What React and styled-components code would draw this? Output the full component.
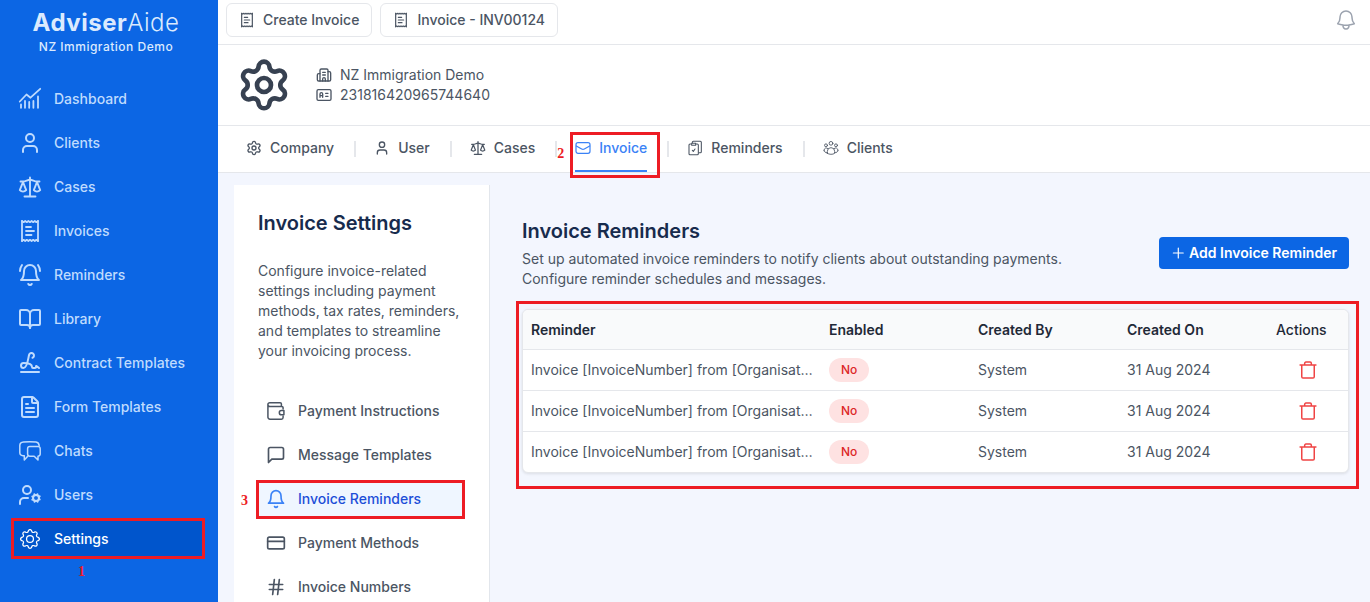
import React from 'react';
import styled, { createGlobalStyle, css } from 'styled-components';
import { BookOpen, Building2, CreditCard, FileText, Settings, Signature, User } from 'lucide-react';
import { FiBell, FiHash, FiMessageSquare } from 'react-icons/fi';
import { BsGear } from 'react-icons/bs';

const GlobalStyle = createGlobalStyle`
  * {
    box-sizing: border-box;
  }
  body {
    margin: 0;
    font-family: Inter, "Liberation Sans", sans-serif;
    font-size: 14px;
    line-height: 20px;
    color: #4b5563;
    background: #f3f6fe;
  }
  a {
    color: inherit;
    text-decoration: none;
  }
  button {
    font: inherit;
    cursor: pointer;
  }
  h1, h2, p, ul {
    margin: 0;
    padding: 0;
  }
  svg {
    flex-shrink: 0;
  }
`;

//icons
const Icon = ({ size = 24, width = 2, children }) => (
  <svg width={ size } height={ size } viewBox="0 0 24 24" fill="none" stroke="currentColor"
    strokeWidth={ width } strokeLinecap="round" strokeLinejoin="round" aria-hidden="true">
    { children }
  </svg>
);

const ChartIcon = () => (
  <Icon width={ 1.8 }>
    <path d="M1.8 14.5 8.5 7.5l4 3.2 9.7-8.9" />
    <path d="M3 17.5v3.3M7 14v6.8M11.2 15v5.8M15.4 14v6.8M20 9.5v11.3" />
  </Icon>
);

const ScaleIcon = ({ size }) => (
  <Icon size={ size } width={ 1.9 }>
    <path d="M12 2.5v19M6.5 21.5h11" />
    <path d="M2.5 6.5H5c2.6 0 4.6-1.8 7-1.8s4.4 1.8 7 1.8h2.5" />
    <path d="m5 7-3.2 8.2c1.8 1.9 4.6 1.9 6.4 0zM19 7l-3.2 8.2c1.8 1.9 4.6 1.9 6.4 0z" />
  </Icon>
);

const ReceiptIcon = ({ size }) => (
  <Icon size={ size } width={ 1.8 }>
    <path d="M4 2v20M20 2v20" />
    <path d="m4 2 1.6 1.2L7.2 2l1.6 1.2L10.4 2 12 3.2 13.6 2l1.6 1.2L16.8 2l1.6 1.2L20 2" />
    <path d="m4 22 1.6-1.2L7.2 22l1.6-1.2 1.6 1.2 1.6-1.2 1.6 1.2 1.6-1.2 1.6 1.2 1.6-1.2L20 22" />
    <path d="M8 8h5M8 12h8M8 16h5.5" />
  </Icon>
);

const BellRingIcon = () => (
  <Icon>
    <path d="M6 8a6 6 0 0 1 12 0c0 7 3 9 3 9H3s3-2 3-9" />
    <path d="M10.3 21a1.94 1.94 0 0 0 3.4 0" />
    <path d="M4 2C2.8 3.7 2 5.7 2 8M22 8c0-2.3-.8-4.3-2-6" />
  </Icon>
);

const ChatsIcon = () => (
  <Icon width={ 1.5 }>
    <path d="M9.5 17.5 6.3 21v-4.300H5C2.800 16.700 1.800 15.500 1.800 13.500V6.500C1.800 4.200 3 3.200 5.500 3c4-.4 8.500-.4 12.500 0 2 .2 3 1.300 3.200 3.800" />
    <path d="M11.800 7.500h8.200a2.200 2.200 0 0 1 2.200 2.200v5.300a2.200 2.200 0 0 1-2.200 2.200V21l-3.800-3.800h-4.400a2.200 2.200 0 0 1-2.200-2.200V9.700a2.200 2.200 0 0 1 2.200-2.200Z" />
  </Icon>
);

const UserCogIcon = () => (
  <Icon>
    <circle cx="9" cy="7" r="4" />
    <path d="M10 15H6a4 4 0 0 0-4 4v2" />
    <circle cx="18" cy="15" r="3" />
    <path d="m21.7 16.4-.9-.3M15.2 13.9l-.9-.3M16.6 18.7l.3-.9M19.1 12.2l.3-.9M19.6 18.7l-.4-1M16.8 12.3l-.4-1M14.3 16.6l1-.4M20.7 13.8l1-.4" />
  </Icon>
);

const CardIdIcon = () => (
  <Icon size={ 16 }>
    <rect x="1.5" y="4" width="21" height="16" rx="2" />
    <path d="M6 15.5v-5a1.5 1.5 0 0 1 4 0v5M6 13h4M14.5 9.5H18M14.5 14H18" />
  </Icon>
);

const MailIcon = () => (
  <Icon size={ 16 } width={ 1.8 }>
    <rect x="1.5" y="4" width="21" height="16" rx="3" />
    <path d="m2 9 8 4.5a4 4 0 0 0 4 0L22 9" />
  </Icon>
);

const ClipboardIcon = () => (
  <Icon size={ 16 } width={ 1.6 }>
    <path d="M8 4V3.500A1.500 1.500 0 0 1 9.500 2H20a1.500 1.500 0 0 1 1.500 1.500v14A1.500 1.500 0 0 1 20 19h-2" />
    <path d="M6 6H4.500A1.500 1.500 0 0 0 3 7.500v13A1.500 1.500 0 0 0 4.500 22h11a1.500 1.500 0 0 0 1.500-1.500v-13A1.500 1.500 0 0 0 15.500 6H14" />
    <path d="M7 5h6v3H7zM8 15.500l1.500 1.500 2.500-3.500" />
  </Icon>
);

const GroupIcon = () => (
  <Icon size={ 16 } width={ 1.3 }>
    <circle cx="12" cy="5" r="2.8" />
    <circle cx="4.5" cy="8" r="2.2" />
    <circle cx="19.5" cy="8" r="2.2" />
    <path d="M6.500 20v-3a5.500 5.500 0 0 1 11 0v3c-3 2-8 2-11 0zM1.500 15.500a3.500 3.500 0 0 1 6-2.500M22.500 15.500a3.500 3.500 0 0 0-6-2.500M1.500 15.500c0 2.500 2 3.500 5 3.500M22.500 15.500c0 2.500-2 3.500-5 3.500" />
  </Icon>
);

const WalletIcon = () => (
  <Icon size={ 20 } width={ 1.8 }>
    <path d="M20.5 9.5V8A1.5 1.5 0 0 0 19 6.500H4.500a2.200 2.200 0 0 1 0-4.500H17a1.500 1.500 0 0 1 1.500 1.500v3M2.300 4v15A2.500 2.500 0 0 0 5 21.800h13.500a2 2 0 0 0 2-2V18" />
    <path d="M21.5 11.5v5h-3a2.500 2.500 0 0 1 0-5z" />
  </Icon>
);

const TrashIcon = () => (
  <Icon size={ 20 } width={ 1.8 }>
    <path d="M2.5 6h19M4.5 6v14A1.5 1.5 0 0 0 6 21.500h12a1.500 1.500 0 0 0 1.500-1.500V6M8 6V4a1.500 1.500 0 0 1 1.500-1.500h5A1.500 1.500 0 0 1 16 4v2" />
  </Icon>
);

const AlertBellIcon = () => (
  <Icon size={ 24 } width={ 1.5 }>
    <path d="M14.857 17.082a23.848 23.848 0 0 0 5.454-1.31A8.967 8.967 0 0 1 18 9.75V9A6 6 0 0 0 6 9v.75a8.967 8.967 0 0 1-2.312 6.022c1.733.64 3.56 1.085 5.455 1.31m5.714 0a24.255 24.255 0 0 1-5.714 0m5.714 0a3 3 0 1 1-5.714 0" />
  </Icon>
);

//callouts
const Mark = styled.span`
  position: absolute;
  inset: ${ (p) => p.$inset };
  border: 3px solid #ed1c24;
  pointer-events: none;
`;

const Step = styled.span`
  position: absolute;
  left: ${ (p) => p.$left };
  top: ${ (p) => p.$top };
  font: bold 14px/16px "Liberation Serif", serif;
  color: #ed1c24;
`;

//sidebar
const Shell = styled.div`
  display: flex;
  height: 100vh;
  overflow: hidden;
`;

const Sidebar = styled.aside`
  flex: 0 0 218px;
  padding: 9px 14px 0 12px;
  background: #0c66e4;
  color: #bfdbfe;
`;

const Brand = styled.div`
  padding-right: 4px;
  margin-bottom: 24px;
  text-align: center;
  letter-spacing: 0.5px;
  color: #dbeafe;
`;

const BrandName = styled.div`
  font-size: 24px;
  line-height: 28px;
  font-weight: 300;
  b {
    font-weight: 700;
  }
`;

const BrandOrg = styled.div`
  font-size: 12px;
  line-height: 20px;
  font-weight: 500;
`;

const NavList = styled.nav`
  display: flex;
  flex-direction: column;
  gap: 8px;
`;

const NavItem = styled.a`
  position: relative;
  display: flex;
  align-items: center;
  gap: 12px;
  height: 36px;
  padding: 0 6px;
  font-weight: 500;
  ${ (p) => p.$active && css`
    background: #0055cc;
    color: #ffffff;
  ` }
`;

//top area
const Main = styled.main`
  flex: 1;
  min-width: 0;
  display: flex;
  flex-direction: column;
`;

const TopBar = styled.div`
  display: flex;
  align-items: center;
  gap: 8px;
  height: 45px;
  padding: 0 12px 4px 8px;
  background: #ffffff;
  border-bottom: 1px solid #e5e7eb;
`;

const OpenTab = styled.button`
  display: flex;
  align-items: center;
  gap: 8px;
  height: 34px;
  padding: 0 12px;
  border: 1px solid #e5e7eb;
  border-radius: 6px;
  background: #ffffff;
  color: #4b5563;
  font-weight: 500;
`;

const IconButton = styled.button`
  display: flex;
  padding: 0;
  border: 0;
  background: none;
  color: ${ (p) => p.$color };
`;

const BellButton = styled(IconButton)`
  margin-left: auto;
`;

const OrgHeader = styled.header`
  display: flex;
  align-items: center;
  gap: 24px;
  height: 81px;
  padding: 0 18px;
  background: #ffffff;
  border-bottom: 1px solid #e5e7eb;
  > svg {
    color: #374151;
  }
`;

const OrgLine = styled.div`
  display: flex;
  align-items: center;
  gap: 8px;
`;

const Tabs = styled.nav`
  display: flex;
  height: 47px;
  padding: 0 28px;
  background: #ffffff;
  border-bottom: 1px solid #e5e7eb;
`;

const TabSlot = styled.div`
  display: flex;
  & + &::before {
    content: "";
    width: 2px;
    height: 16px;
    margin: 15px 18px 0 20px;
    background: #e5e7eb;
  }
`;

const Tab = styled.a`
  position: relative;
  display: flex;
  align-items: center;
  gap: 8px;
  font-weight: 500;
  color: ${ (p) => p.$active ? '#3b82f6' : '#4b5563' };
  border-bottom: 2px solid ${ (p) => p.$active ? '#3b82f6' : 'transparent' };
`;

//content
const Content = styled.div`
  flex: 1;
  min-height: 0;
  display: flex;
  padding: 12px 21px 0 16px;
`;

const SidePanel = styled.section`
  flex: 0 0 256px;
  padding: 24px;
  background: #ffffff;
  border-right: 1px solid #e2e6ec;
`;

const Title = styled.h2`
  font-size: 20px;
  line-height: 28px;
  font-weight: 600;
  color: #172b4d;
`;

const PanelText = styled.p`
  margin: 24px 0 32px;
`;

const PanelList = styled.nav`
  display: flex;
  flex-direction: column;
  gap: 8px;
`;

const PanelItem = styled.a`
  position: relative;
  display: flex;
  align-items: center;
  gap: 12px;
  height: 36px;
  padding: 0 8px;
  font-weight: 500;
  ${ (p) => p.$active && css`
    background: #eff6ff;
    color: #1d4ed8;
    svg {
      color: #3b82f6;
    }
  ` }
`;

const Reminders = styled.section`
  flex: 1;
  min-width: 0;
  padding: 32px 0 0 32px;
`;

const RemindersHead = styled.div`
  display: flex;
  align-items: center;
  justify-content: space-between;
  gap: 24px;
  margin-bottom: 20px;
`;

const Intro = styled.p`
  max-width: 576px;
  margin-top: 4px;
`;

const AddButton = styled.button`
  display: flex;
  align-items: center;
  gap: 4px;
  height: 32px;
  padding: 0 12px;
  border: 0;
  border-radius: 4px;
  background: #0c66e4;
  color: #ffffff;
  font-weight: 600;
  white-space: nowrap;
`;

const TableCard = styled.div`
  position: relative;
  border: 1px solid #e5e7eb;
  border-radius: 6px;
  background: #ffffff;
  box-shadow: 0 1px 3px rgba(0, 0, 0, 0.1);
`;

const Table = styled.table`
  width: 100%;
  table-layout: fixed;
  border-collapse: separate;
  border-spacing: 0;
  thead th {
    background: #f9fafb;
  }
  th:first-child {
    border-top-left-radius: 6px;
  }
  th:last-child {
    border-top-right-radius: 6px;
  }
  tbody td {
    border-top: 1px solid #e5e7eb;
  }
`;

const Th = styled.th`
  width: ${ (p) => p.$width };
  height: 39px;
  padding: 0 8px;
  text-align: left;
  font-weight: ${ (p) => p.$light ? 500 : 600 };
  color: #1f2937;
`;

const Td = styled.td`
  height: 41px;
  padding: 0 8px;
  overflow: hidden;
  text-overflow: ellipsis;
  white-space: nowrap;
  ${ IconButton } {
    margin: 0 auto;
  }
`;

const Pill = styled.span`
  display: inline-block;
  padding: 0 12px;
  border-radius: 12px;
  background: #fee2e2;
  color: #dc2626;
  font-size: 12px;
  line-height: 24px;
  font-weight: 500;
`;

const navItems = [
  { label: 'Dashboard', icon: <ChartIcon /> },
  { label: 'Clients', icon: <User size={ 24 } /> },
  { label: 'Cases', icon: <ScaleIcon /> },
  { label: 'Invoices', icon: <ReceiptIcon /> },
  { label: 'Reminders', icon: <BellRingIcon /> },
  { label: 'Library', icon: <BookOpen size={ 24 } /> },
  { label: 'Contract Templates', icon: <Signature size={ 24 } /> },
  { label: 'Form Templates', icon: <FileText size={ 24 } /> },
  { label: 'Chats', icon: <ChatsIcon /> },
  { label: 'Users', icon: <UserCogIcon /> },
  { label: 'Settings', icon: <Icon><BsGear x="2" y="2" size={ 20 } stroke="none" /></Icon>, active: true },
];

const tabs = [
  { label: 'Company', icon: <Settings size={ 16 } /> },
  { label: 'User', icon: <User size={ 16 } /> },
  { label: 'Cases', icon: <ScaleIcon size={ 16 } /> },
  { label: 'Invoice', icon: <MailIcon />, active: true },
  { label: 'Reminders', icon: <ClipboardIcon /> },
  { label: 'Clients', icon: <GroupIcon /> },
];

const panelItems = [
  { label: 'Payment Instructions', icon: <WalletIcon /> },
  { label: 'Message Templates', icon: <FiMessageSquare size={ 20 } /> },
  { label: 'Invoice Reminders', icon: <FiBell size={ 20 } />, active: true },
  { label: 'Payment Methods', icon: <CreditCard size={ 20 } /> },
  { label: 'Invoice Numbers', icon: <FiHash size={ 20 } /> },
];

const reminders = [ 1, 2, 3 ].map((id) => ({
  id,
  name: 'Invoice [InvoiceNumber] from [OrganisationName]',
  enabled: 'No',
  createdBy: 'System',
  createdOn: '31 Aug 2024',
}));

function App() {
  return (<>
    <GlobalStyle />
    <Shell>
      <Sidebar>
        <Brand>
          <BrandName><b>Adviser</b>Aide</BrandName>
          <BrandOrg>NZ Immigration Demo</BrandOrg>
        </Brand>
        <NavList>
          { navItems.map((item) => (
            <NavItem key={ item.label } href="#" $active={ item.active }>
              { item.icon }
              { item.label }
              { item.active && <Mark $inset="-3px -1px -2px" /> }
              { item.active && <Step $left="66px" $top="43px">1</Step> }
            </NavItem>
          )) }
        </NavList>
      </Sidebar>
      <Main>
        <TopBar>
          <OpenTab><ReceiptIcon size={ 16 } />Create Invoice</OpenTab>
          <OpenTab><ReceiptIcon size={ 16 } />Invoice - INV00124</OpenTab>
          <BellButton $color="#9ca3af" aria-label="Notifications"><AlertBellIcon /></BellButton>
        </TopBar>
        <OrgHeader>
          <Settings size={ 56 } />
          <div>
            <OrgLine><Building2 size={ 16 } />NZ Immigration Demo</OrgLine>
            <OrgLine><CardIdIcon />231816420965744640</OrgLine>
          </div>
        </OrgHeader>
        <Tabs>
          { tabs.map((tab) => (
            <TabSlot key={ tab.label }>
              <Tab href="#" $active={ tab.active }>
                { tab.icon }
                { tab.label }
                { tab.active && <Mark $inset="6px -13px -8px -5px" /> }
                { tab.active && <Step $left="-18px" $top="20px">2</Step> }
              </Tab>
            </TabSlot>
          )) }
        </Tabs>
        <Content>
          <SidePanel>
            <Title>Invoice Settings</Title>
            <PanelText>
              Configure invoice-related settings including payment methods, tax rates, reminders,
              and templates to streamline your invoicing process.
            </PanelText>
            <PanelList>
              { panelItems.map((item) => (
                <PanelItem key={ item.label } href="#" $active={ item.active }>
                  { item.icon }
                  { item.label }
                  { item.active && <Mark $inset="-1px 0 -2px -2px" /> }
                  { item.active && <Step $left="-17px" $top="12px">3</Step> }
                </PanelItem>
              )) }
            </PanelList>
          </SidePanel>
          <Reminders>
            <RemindersHead>
              <div>
                <Title>Invoice Reminders</Title>
                <Intro>
                  Set up automated invoice reminders to notify clients about outstanding payments.
                  Configure reminder schedules and messages.
                </Intro>
              </div>
              <AddButton>
                <Icon size={ 14 }><path d="M12.5 3.5v17M4 12h17" /></Icon>
                Add Invoice Reminder
              </AddButton>
            </RemindersHead>
            <TableCard>
              <Table>
                <thead>
                  <tr>
                    <Th>Reminder</Th>
                    <Th $width="149px">Enabled</Th>
                    <Th $width="149px">Created By</Th>
                    <Th $width="149px">Created On</Th>
                    <Th $width="80px" $light>Actions</Th>
                  </tr>
                </thead>
                <tbody>
                  { reminders.map((row) => (
                    <tr key={ row.id }>
                      <Td>{ row.name }</Td>
                      <Td><Pill>{ row.enabled }</Pill></Td>
                      <Td>{ row.createdBy }</Td>
                      <Td>{ row.createdOn }</Td>
                      <Td><IconButton $color="#ef4444" aria-label="Delete reminder"><TrashIcon /></IconButton></Td>
                    </tr>
                  )) }
                </tbody>
              </Table>
              <Mark $inset="-9px -11px -17px -7px" />
            </TableCard>
          </Reminders>
        </Content>
      </Main>
    </Shell>
  </>);
}

export default App;
